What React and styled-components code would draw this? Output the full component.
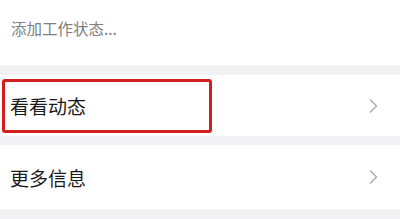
import React from 'react';
import styled, { createGlobalStyle } from 'styled-components';

const GlobalStyle = createGlobalStyle`
  html, body {
    margin: 0;
    padding: 0;
    background: #f1f1f3;
    font-family: "Noto Sans CJK SC", "Noto Sans", sans-serif;
  }
`;

const Page = styled.div`
  width: 400px;
  height: 219px;
  background: #f1f1f3;
  display: flex;
  flex-direction: column;
  position: relative;
  overflow: hidden;
`;

const StatusBox = styled.div`
  height: 65px;
  box-sizing: border-box;
  background: #fff;
  padding: 17px 11px 0;
  font-size: 15.5px;
  line-height: 22px;
  color: #808080;
  font-weight: 400;
  margin-bottom: 10px;
`;

const Row = styled.div`
  height: ${(p) => p.$h}px;
  background: #fff;
  display: flex;
  align-items: center;
  justify-content: space-between;
  padding: 0 22px 0 10px;
  margin-bottom: ${(p) => p.$gap || 0}px;
`;

const Label = styled.span`
  font-size: 19px;
  color: #1a1a1a;
  font-weight: 400;
`;

const Highlight = styled.div`
  position: absolute;
  left: 2px;
  top: 79px;
  width: 204px;
  height: 48px;
  border: 3px solid #d01f1c;
  border-radius: 3px;
  pointer-events: none;
`;

const Chevron = () => (
  <svg width="9" height="16" viewBox="0 0 9 16">
    <path d="M1 1.5 L7.5 8 L1 14.5" fill="none" stroke="#a8a8a8" strokeWidth="1.3" />
  </svg>
);

export default function App() {
  return (
    <>
      <GlobalStyle />
      <Page>
        <StatusBox>添加工作状态...</StatusBox>
        <Row $h={61} $gap={9}>
          <Label>看看动态</Label>
          <Chevron />
        </Row>
        <Row $h={64}>
          <Label>更多信息</Label>
          <Chevron />
        </Row>
        <Highlight />
      </Page>
    </>
  );
}
